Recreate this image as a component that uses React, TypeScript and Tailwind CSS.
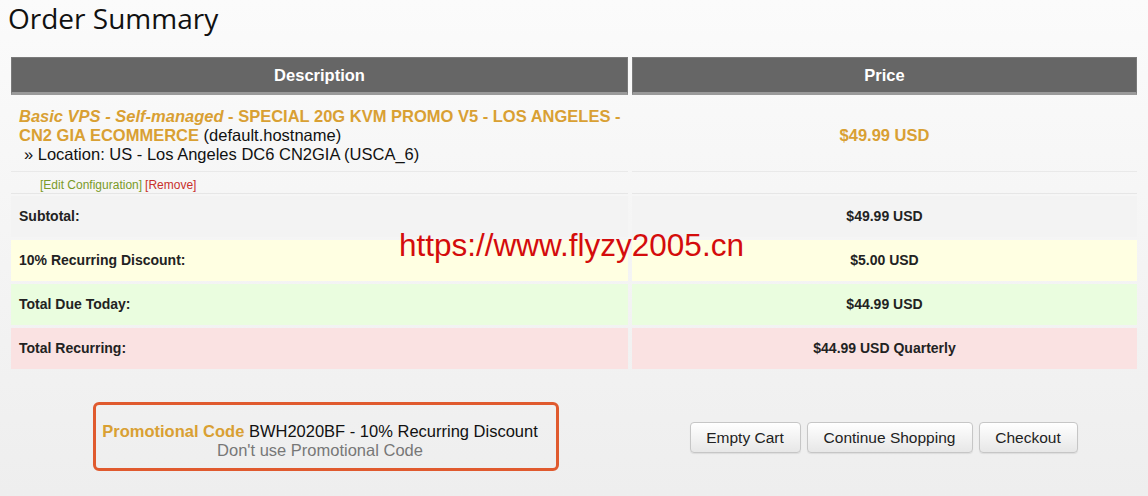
import React from "react";

const arial = { fontFamily: '"Liberation Sans", Arial, sans-serif' };

function SummaryRow({ label, value, bg }: { label: string; value: string; bg: string }) {
  return (
    <>
      <div className={`${bg} h-[41px] flex items-center pl-[8px] text-[14px] font-bold text-[#222]`}>{label}</div>
      <div className={`${bg} h-[41px] flex items-center justify-center text-[14px] font-bold text-[#222]`}>{value}</div>
    </>
  );
}

export default function App() {
  return (
    <div
      className="relative w-[1148px] h-[496px] overflow-hidden bg-gradient-to-b from-[#fbfbfb] to-[#eeeeee]"
      style={arial}
    >
      <h1
        className="pl-[8px] h-[36px] text-[28px] leading-[36px] text-[#111] font-normal"
        style={{ fontFamily: '"Open Sans", sans-serif' }}
      >
        Order Summary
      </h1>

      <div className="ml-[11px] mt-[21px] w-[1126px] grid grid-cols-[617px_505px] gap-x-[4px]">
        <div className="h-[38px] bg-[#666] border border-[#7a7a7a] border-b-[3px] border-b-[#9a9a9a] flex items-center justify-center text-white font-bold text-[16.5px]">
          Description
        </div>
        <div className="h-[38px] bg-[#666] border border-[#7a7a7a] border-b-[3px] border-b-[#9a9a9a] flex items-center justify-center text-white font-bold text-[16.5px]">
          Price
        </div>

        <div className="mt-[2px] h-[75px] pt-[10px] pl-[8px] text-[16.5px] leading-[19px] border-b border-[#e9e9e9]">
          <span className="font-bold text-[#d9a033]">
            <i>Basic VPS - Self-managed</i> - SPECIAL 20G KVM PROMO V5 - LOS ANGELES -
            <br />
            CN2 GIA ECOMMERCE
          </span>{" "}
          <span className="text-[#111]">(default.hostname)</span>
          <br />
          <span className="pl-[5px] text-[#111]">» Location: US - Los Angeles DC6 CN2GIA (USCA_6)</span>
        </div>
        <div className="mt-[2px] h-[75px] pt-[3px] flex items-center justify-center text-[16.5px] font-bold text-[#d9a033] border-b border-[#e9e9e9]">
          $49.99 USD
        </div>

        <div className="h-[22px] pl-[29px] pt-[5px] flex items-center text-[12px] border-b border-[#e6e6e6]">
          <span className="text-[#7a9a28]">[Edit Configuration]</span>
          <span className="ml-[3px] text-[#c8302c]">[Remove]</span>
        </div>
        <div className="h-[22px] border-b border-[#e6e6e6]"></div>

        <div className="col-span-2 h-[2px]"></div>
        <SummaryRow label="Subtotal:" value="$49.99 USD" bg="bg-[#f3f3f3]" />
        <div className="col-span-2 h-[3px]"></div>
        <SummaryRow label="10% Recurring Discount:" value="$5.00 USD" bg="bg-[#ffffe2]" />
        <div className="col-span-2 h-[3px]"></div>
        <SummaryRow label="Total Due Today:" value="$44.99 USD" bg="bg-[#eafddf]" />
        <div className="col-span-2 h-[3px]"></div>
        <SummaryRow label="Total Recurring:" value="$44.99 USD Quarterly" bg="bg-[#fae2e2]" />
      </div>

      <div className="ml-[11px] mt-[33px] w-[1126px] grid grid-cols-[629px_497px] items-center">
        <div className="flex justify-center pl-[1px]">
          <div className="w-[466px] h-[69px] border-[3px] border-[#e05a2e] rounded-[6px] pt-[17px] pr-[12px] text-center text-[16.5px] leading-[19px]">
            <div>
              <span className="font-bold text-[#d9a033]">Promotional Code</span>{" "}
              <span className="text-[#111]">BWH2020BF - 10% Recurring Discount</span>
            </div>
            <div className="text-[#777]">Don't use Promotional Code</div>
          </div>
        </div>
        <div className="flex justify-center gap-[6px] pr-[10px] mt-[2px]">
          {["Empty Cart", "Continue Shopping", "Checkout"].map((t, i) => (
            <button
              key={t}
              className={`h-[31px] ${i === 0 ? "w-[111px]" : i === 1 ? "w-[166px]" : "w-[99px]"} rounded-[4px] border border-[#c6c6c6] bg-gradient-to-b from-white to-[#e7e7e7] shadow-[0_1px_1px_rgba(0,0,0,0.08)] text-[15.5px] text-[#222]`}
              style={{ fontFamily: '"Liberation Sans", Arial, sans-serif' }}
            >
              {t}
            </button>
          ))}
        </div>
      </div>

      <div className="absolute left-[399px] top-[230px] text-[31.5px] leading-none text-[#d40c0c] pointer-events-none">
        https://www.flyzy2005.cn
      </div>
    </div>
  );
}
